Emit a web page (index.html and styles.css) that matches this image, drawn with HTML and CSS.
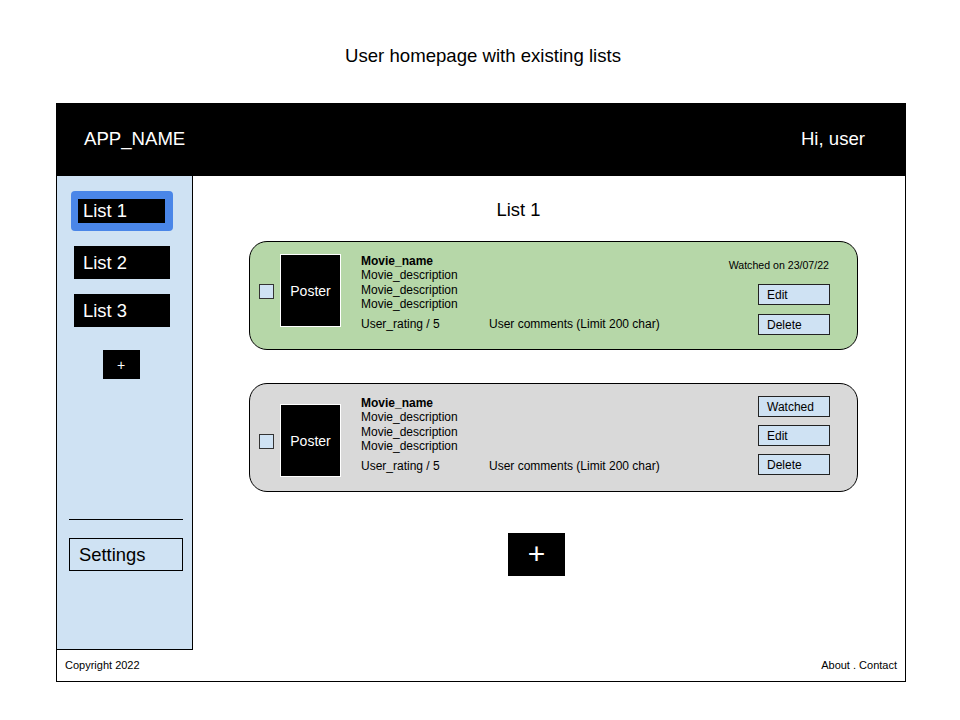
FILE: index.html
```html
<!DOCTYPE html>
<html lang="en">
<head>
    <meta charset="UTF-8">
    <title>User homepage</title>
    <link rel="stylesheet" href="styles.css">
</head>
<body>

    <h1 class="page-title">User homepage with existing lists</h1>

    <div class="frame">
        <header class="topbar">
            <span class="app-name">APP_NAME</span>
            <span class="greeting">Hi, user</span>
        </header>

        <div class="content">
            <aside class="sidebar">
                <div class="lists">
                    <div class="list-active"><a class="list-link" href="#">List 1</a></div>
                    <a class="list-link" href="#">List 2</a>
                    <a class="list-link" href="#">List 3</a>
                    <button class="add-list">+</button>
                </div>
                <div class="sidebar-bottom">
                    <hr class="divider">
                    <a class="settings" href="#">Settings</a>
                </div>
            </aside>

            <main class="main">
                <h2 class="list-title">List 1</h2>

                <div class="card card-watched">
                    <div class="pick">
                        <span class="checkbox"></span>
                        <div class="poster">Poster</div>
                    </div>
                    <div class="info">
                        <div class="movie-name">Movie_name</div>
                        <div class="desc">Movie_description</div>
                        <div class="desc">Movie_description</div>
                        <div class="desc">Movie_description</div>
                        <div class="meta">
                            <span class="rating">User_rating / 5</span>
                            <span class="comments">User comments (Limit 200 char)</span>
                        </div>
                    </div>
                    <div class="actions">
                        <div class="watched-on">Watched on 23/07/22</div>
                        <button class="btn">Edit</button>
                        <button class="btn">Delete</button>
                    </div>
                </div>

                <div class="card card-todo">
                    <div class="pick">
                        <span class="checkbox"></span>
                        <div class="poster">Poster</div>
                    </div>
                    <div class="info">
                        <div class="movie-name">Movie_name</div>
                        <div class="desc">Movie_description</div>
                        <div class="desc">Movie_description</div>
                        <div class="desc">Movie_description</div>
                        <div class="meta">
                            <span class="rating">User_rating / 5</span>
                            <span class="comments">User comments (Limit 200 char)</span>
                        </div>
                    </div>
                    <div class="actions">
                        <button class="btn">Watched</button>
                        <button class="btn">Edit</button>
                        <button class="btn">Delete</button>
                    </div>
                </div>

                <button class="add-movie">+</button>
            </main>
        </div>

        <footer class="footer">
            <span>Copyright 2022</span>
            <span>About . Contact</span>
        </footer>
    </div>

</body>
</html>
```

FILE: styles.css
```css
body { font-family: "Liberation Sans", Arial, sans-serif; margin: 0; padding: 45px 0 0; background: white; color: black; }
.page-title { font-size: 18.6px; font-weight: normal; text-align: center; margin: 0 0 37px; line-height: 21px; padding-left: 6px; }

.frame { width: 848px; margin-left: 56px; border: 1px solid black; }

.topbar { display: flex; justify-content: space-between; align-items: center; height: 72px; background: black; color: white; font-size: 18.6px; padding: 0 40px 0 27px; line-height: 20px; }
.topbar span { margin-top: -2px; }

.content { display: flex; height: 474px; }

.sidebar { width: 136px; box-sizing: border-box; background: #cfe2f3; border-right: 1px solid black; border-bottom: 1px solid black; padding: 15px 0 0 17px; display: flex; flex-direction: column; justify-content: space-between; }
.lists { display: flex; flex-direction: column; align-items: flex-start; width: 96px; }
.list-link { display: block; box-sizing: border-box; width: 96px; height: 33px; line-height: 33px; padding-left: 9px; background: black; color: white; text-decoration: none; font-size: 18.4px; margin-bottom: 15px; }
.list-active { background: #4a86e8; border-radius: 4px; padding: 8px 8px 8px 7px; margin: 0 0 15px -3px; }
.list-active .list-link { width: 87px; height: 24px; line-height: 24px; padding-left: 5px; margin: 0; }
.add-list { align-self: center; width: 37px; height: 29px; margin: 8px 0 0 -2px; background: black; color: white; border: none; font-family: inherit; font-size: 14px; padding: 0; }
.sidebar-bottom { margin: 0 0 78px -5px; }
.divider { width: 114px; border: none; border-top: 1px solid black; margin: 0 0 18px; }
.settings { display: block; box-sizing: border-box; width: 114px; height: 33px; line-height: 31px; border: 1px solid black; padding-left: 9px; font-size: 18.4px; color: black; text-decoration: none; }

.main { flex: 1; padding: 23px 0 0 56px; }
.list-title { width: 609px; text-align: center; font-size: 18.4px; font-weight: normal; margin: 0 0 21px; padding-right: 70px; box-sizing: border-box; line-height: 21px; }

.card { display: flex; align-items: flex-start; box-sizing: border-box; width: 609px; height: 109px; border: 1px solid black; border-radius: 18px; padding: 12px 27px 0 9px; margin-bottom: 33px; font-size: 12px; }
.card-watched { background: #b6d7a8; }
.card-todo { background: #d9d9d9; }
.pick { display: flex; align-items: center; gap: 6px; }
.card-todo .pick { margin-top: 8px; }
.checkbox { display: block; width: 13px; height: 13px; border: 1px solid #333; background: #cfe2f3; margin-top: 2px; }
.poster { display: flex; align-items: center; justify-content: center; box-sizing: border-box; width: 61px; height: 73px; background: black; color: white; border: 1px solid white; font-size: 14px; }
.info { margin-left: 20px; flex: 1; }
.movie-name { font-weight: bold; line-height: 14px; }
.desc { line-height: 14.5px; }
.meta { margin-top: 5px; line-height: 14px; display: flex; }
.rating { width: 128px; }
.actions { display: flex; flex-direction: column; align-items: flex-end; }
.watched-on { font-size: 10.6px; line-height: 14px; margin: 4px 1px 12px 0; }
.btn { box-sizing: border-box; width: 72px; height: 21px; background: #cfe2f3; border: 1px solid #222; font-family: inherit; font-size: 12px; text-align: left; padding: 0 0 0 8px; margin-bottom: 9px; color: black; }
.card-todo .btn { margin-bottom: 8px; }

.add-movie { display: block; width: 57px; height: 43px; margin: 41px 0 0 259px; background: black; color: white; border: none; font-family: inherit; font-size: 30px; padding: 0 0 2px; line-height: 1; }

.footer { display: flex; justify-content: space-between; align-items: center; height: 31px; padding: 0 8px; font-size: 11px; }
.footer span { margin-top: -2px; }
```
